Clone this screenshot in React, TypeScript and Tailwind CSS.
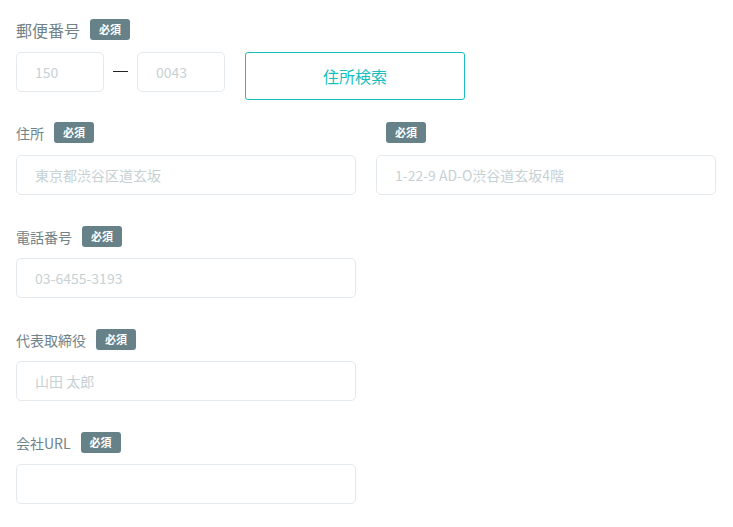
import React from "react";

const font = { fontFamily: '"Noto Sans CJK JP", "Noto Sans", sans-serif' };

function Badge() {
  return (
    <span className="inline-flex h-[21px] w-[40px] items-center justify-center rounded-[3px] bg-[#668187] text-[11px] font-bold leading-none text-white">
      必須
    </span>
  );
}

function Label({ text, large = false }: { text?: string; large?: boolean }) {
  return (
    <div className="flex h-[21px] items-center gap-[10px]">
      {text !== undefined && (
        <span className={`${large ? "text-[16px]" : "text-[14px]"} leading-none text-[#6f8389]`}>{text}</span>
      )}
      <Badge />
    </div>
  );
}

function TextInput({ placeholder, className = "" }: { placeholder?: string; className?: string }) {
  return (
    <input
      type="text"
      placeholder={placeholder}
      className={`h-[40px] rounded-[5px] border border-[#e4e9ee] bg-white pl-[18px] text-[14px] text-[#44555a] outline-none placeholder:text-[#c6d1d4] ${className}`}
    />
  );
}

export default function App() {
  return (
    <div className="min-h-[527px] w-[733px] bg-white pl-[16px] pt-[19px]" style={font}>
      {/* 郵便番号 */}
      <div className="flex flex-col gap-[12px]">
        <Label text="郵便番号" large />
        <div className="flex items-start">
          <TextInput placeholder="150" className="w-[88px]" />
          <span className="mx-[9px] mt-[19px] h-px w-[15px] bg-[#222]" />
          <TextInput placeholder="0043" className="w-[88px]" />
          <button className="ml-[20px] h-[48px] w-[220px] rounded-[3px] border border-[#19bfbf] bg-white text-[16px] text-[#19bfbf]">
            住所検索
          </button>
        </div>
      </div>

      {/* 住所 */}
      <div className="mt-[22px] grid w-[700px] grid-cols-2 gap-x-[20px]">
        <div className="flex flex-col gap-[12px]">
          <Label text="住所" />
          <TextInput placeholder="東京都渋谷区道玄坂" className="w-[340px]" />
        </div>
        <div className="flex flex-col gap-[12px]">
          <div className="pl-[10px]">
            <Label />
          </div>
          <TextInput placeholder="1-22-9 AD-O渋谷道玄坂4階" className="w-[340px]" />
        </div>
      </div>

      {/* 電話番号 */}
      <div className="mt-[31px] flex flex-col gap-[11px]">
        <Label text="電話番号" />
        <TextInput placeholder="03-6455-3193" className="w-[340px]" />
      </div>

      {/* 代表取締役 */}
      <div className="mt-[31px] flex flex-col gap-[11px]">
        <Label text="代表取締役" />
        <TextInput placeholder="山田 太郎" className="w-[340px]" />
      </div>

      {/* 会社URL */}
      <div className="mt-[31px] flex flex-col gap-[11px]">
        <Label text="会社URL" />
        <TextInput className="w-[340px]" />
      </div>
    </div>
  );
}
